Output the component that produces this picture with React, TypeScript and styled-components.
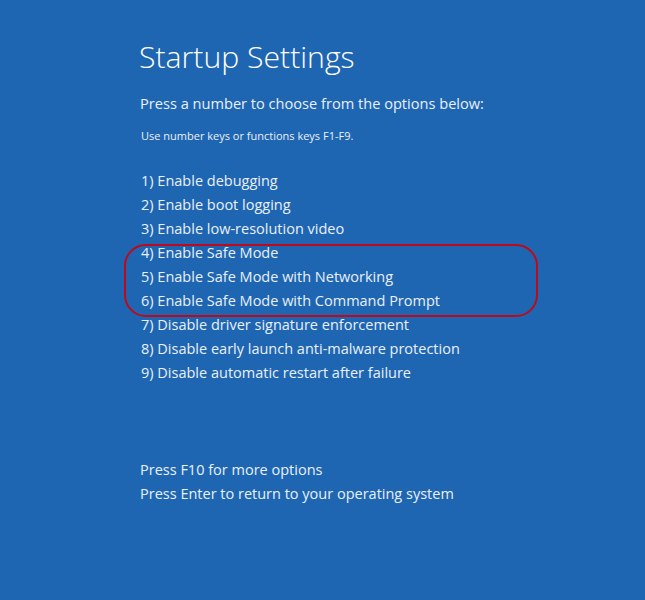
import styled, { createGlobalStyle } from 'styled-components';

const options = [
  'Enable debugging',
  'Enable boot logging',
  'Enable low-resolution video',
  'Enable Safe Mode',
  'Enable Safe Mode with Networking',
  'Enable Safe Mode with Command Prompt',
  'Disable driver signature enforcement',
  'Disable early launch anti-malware protection',
  'Disable automatic restart after failure',
];

const GlobalStyle = createGlobalStyle`
  html, body {
    margin: 0;
    background: #1f66b2;
  }
  body {
    font-family: "Open Sans", "Noto Sans", sans-serif;
  }
`;

const App = () => {
  const before = options.slice(0, 3);
  const marked = options.slice(3, 6);
  const after = options.slice(6);

  return (
    <>
      <GlobalStyle />
      <SScreen>
        <STitle>Startup Settings</STitle>
        <SLead>Press a number to choose from the options below:</SLead>
        <SHint>Use number keys or functions keys F1-F9.</SHint>
        <SList>
          {before.map((text, i) => (
            <SItem key={text}>{i + 1}) {text}</SItem>
          ))}
          <SMarked>
            {marked.map((text, i) => (
              <SItem key={text}>{i + 4}) {text}</SItem>
            ))}
          </SMarked>
          {after.map((text, i) => (
            <SItem key={text}>{i + 7}) {text}</SItem>
          ))}
        </SList>
        <SFooter>
          <SItem>Press F10 for more options</SItem>
          <SItem>Press Enter to return to your operating system</SItem>
        </SFooter>
      </SScreen>
    </>
  );
};

export default App;

const SScreen = styled.main`
  display: flex;
  flex-direction: column;
  width: 645px;
  height: 600px;
  box-sizing: border-box;
  padding: 36px 0 0 139px;
  background: #1f66b2;
  color: #e9f0f8;
`;

const STitle = styled.h1`
  margin: 0;
  font-size: 30.2px;
  line-height: 42px;
  font-weight: 300;
  color: #ffffff;
`;

const SLead = styled.p`
  margin: 13px 0 0 1px;
  font-size: 14.6px;
  line-height: 24px;
`;

const SHint = styled.p`
  margin: 13px 0 0 2px;
  font-size: 11px;
  line-height: 16px;
`;

const SList = styled.ol`
  display: flex;
  flex-direction: column;
  margin: 25px 0 0 2px;
  padding: 0;
  list-style: none;
`;

const SItem = styled.li`
  font-size: 14.5px;
  line-height: 24px;
  white-space: nowrap;
  list-style: none;
`;

const SMarked = styled.div`
  position: relative;
  display: flex;
  flex-direction: column;

  &::after {
    content: '';
    position: absolute;
    top: 3px;
    bottom: -4px;
    left: -17px;
    width: 414px;
    box-sizing: border-box;
    border: 2px solid #c0081a;
    border-radius: 22px;
    pointer-events: none;
  }
`;

const SFooter = styled.ul`
  display: flex;
  flex-direction: column;
  margin: 73px 0 0 1px;
  padding: 0;
`;
